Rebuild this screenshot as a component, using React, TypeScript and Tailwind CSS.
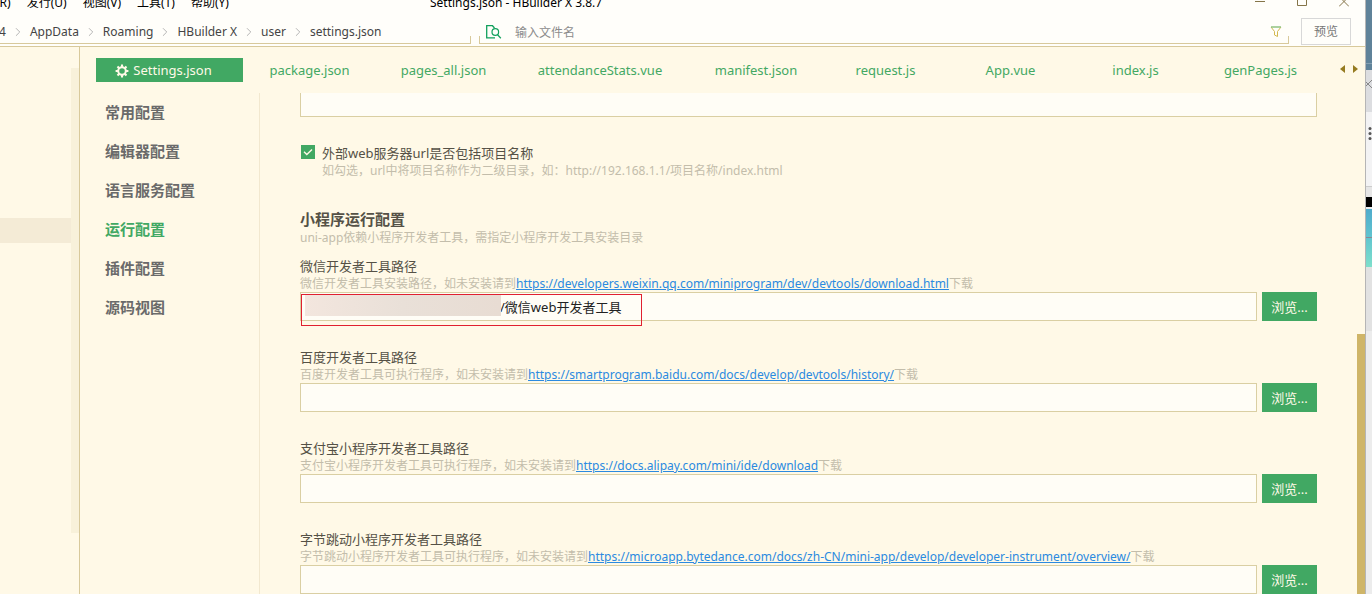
import { ChevronRight } from "lucide-react"
import clsx from "clsx"

const menus = ["发行(U)", "视图(V)", "工具(T)", "帮助(Y)"]

const crumbs = ["AppData", "Roaming", "HBuilder X", "user", "settings.json"]

const tabs = [
  { name: "package.json", width: "w-[133px]" },
  { name: "pages_all.json", width: "w-[135px]" },
  { name: "attendanceStats.vue", width: "w-[178px]" },
  { name: "manifest.json", width: "w-[134px]" },
  { name: "request.js", width: "w-[125px]" },
  { name: "App.vue", width: "w-[125px]" },
  { name: "index.js", width: "w-[125px]" },
  { name: "genPages.js", width: "w-[125px]" },
]

const sections = ["常用配置", "编辑器配置", "语言服务配置", "运行配置", "插件配置", "源码视图"]

const fields = [
  {
    id: "weixin",
    label: "微信开发者工具路径",
    hint: "微信开发者工具安装路径，如未安装请到",
    url: "https://developers.weixin.qq.com/miniprogram/dev/devtools/download.html",
    value: "/微信web开发者工具",
  },
  {
    id: "baidu",
    label: "百度开发者工具路径",
    hint: "百度开发者工具可执行程序，如未安装请到",
    url: "https://smartprogram.baidu.com/docs/develop/devtools/history/",
    value: "",
  },
  {
    id: "alipay",
    label: "支付宝小程序开发者工具路径",
    hint: "支付宝小程序开发者工具可执行程序，如未安装请到",
    url: "https://docs.alipay.com/mini/ide/download",
    value: "",
  },
  {
    id: "bytedance",
    label: "字节跳动小程序开发者工具路径",
    hint: "字节跳动小程序开发者工具可执行程序，如未安装请到",
    url: "https://microapp.bytedance.com/docs/zh-CN/mini-app/develop/developer-instrument/overview/",
    value: "",
  },
]

function GearIcon() {
  return (
    <svg width="14" height="14" viewBox="0 0 14 14" fill="none" stroke="currentColor">
      <circle cx="7" cy="7" r="3.8" strokeWidth="2" />
      <path
        d="M7 .6V3M7 11V13.4M.6 7H3M11 7H13.4M2.5 2.5L4.2 4.2M9.8 9.8L11.5 11.5M2.5 11.5L4.2 9.8M9.8 4.2L11.5 2.5"
        strokeWidth="2.1"
      />
    </svg>
  )
}

function TitleBar() {
  return (
    <div className="flex h-[13px] items-end text-[12px] leading-5 text-black">
      <div className="flex w-[430px] shrink-0 items-end gap-4 whitespace-nowrap">
        <button className="-ml-1">(R)</button>
        {menus.map((menu) => (
          <button key={menu}>{menu}</button>
        ))}
      </div>
      <span className="flex-1 whitespace-nowrap">Settings.json - HBuilder X 3.8.7</span>
      <div className="flex gap-8 self-start pr-4 text-[#857549]">
        <button aria-label="最小化">
          <svg width="10" height="8" viewBox="0 0 10 8" stroke="currentColor">
            <path d="M0 1.5H10" />
          </svg>
        </button>
        <button aria-label="最大化">
          <svg width="10" height="8" viewBox="0 0 10 8" fill="none" stroke="currentColor">
            <path d="M.5 0V5.5H9.5V0" />
          </svg>
        </button>
        <button aria-label="关闭">
          <svg width="10" height="8" viewBox="0 0 10 8" stroke="currentColor">
            <path d="M0 6.5L6.5 0M10 6.5L3.5 0" />
          </svg>
        </button>
      </div>
    </div>
  )
}

function AddressBar() {
  return (
    <div className="flex h-[33px] items-end border-b border-[#d8c99b] pr-[14px] text-[12px] text-[#444]">
      <nav className="mb-[2px] flex h-7 w-[471px] shrink-0 items-end border-b border-[#d8c99b]">
        <div className="flex h-7 flex-1 items-center gap-[9px] whitespace-nowrap pt-[6px]">
          <span className="-ml-px">4</span>
          {crumbs.map((crumb) => (
            <span key={crumb} className="flex items-center gap-[9px]">
              <ChevronRight className="-mx-1 h-[14px] w-[14px] text-[#aaa]" strokeWidth={1.5} />
              <a href="#" className="leading-5">
                {crumb}
              </a>
            </span>
          ))}
        </div>
        <div className="h-[7px] w-px bg-[#d8c99b]" />
      </nav>
      <div className="mb-[2px] ml-2 flex h-7 flex-1 items-end border-b border-[#d8c99b]">
        <div className="h-[7px] w-px bg-[#d8c99b]" />
        <div className="flex h-7 flex-1 items-center px-[6px] pt-[6px]">
          <svg width="16" height="14" viewBox="0 0 16 14" fill="none" stroke="#12a05c">
            <path d="M9 12.9H.7V.7H6.5L8.5 3" strokeWidth="1.3" />
            <circle cx="9.3" cy="7" r="3.3" strokeWidth="1.2" />
            <path d="M11.5 9.6L14.8 13.2" strokeWidth="1.3" />
          </svg>
          <input
            aria-label="输入文件名"
            placeholder="输入文件名"
            className="ml-[13px] h-5 flex-1 bg-transparent text-[12px] outline-none placeholder:text-[#8c8c8c]"
          />
          <button aria-label="过滤">
            <svg width="12" height="12" viewBox="0 0 12 12" fill="none">
              <path d="M1 1H11L7.5 5.5V10.5L4.5 9V5.5Z" stroke="#d3b94f" />
              <path d="M1 1H11" stroke="#6fc79a" />
            </svg>
          </button>
        </div>
        <div className="h-[7px] w-px bg-[#d8c99b]" />
      </div>
      <button className="mb-[1px] ml-3 h-[27px] w-[50px] border border-[#d8d8d8] text-[12px] text-[#777]">预览</button>
    </div>
  )
}

function Tabs() {
  return (
    <div className="flex h-[46px] shrink-0 items-center pl-4 pr-[7px] text-[13px] text-[#43a863]">
      <button className="flex h-6 w-[147px] shrink-0 items-center justify-center gap-1 bg-[#41a863] pr-3 pt-px text-[#fff9e7]">
        <GearIcon />
        Settings.json
      </button>
      {tabs.map((tab) => (
        <button key={tab.name} className={clsx("h-6 shrink-0 pt-[2px]", tab.width)}>
          {tab.name}
        </button>
      ))}
      <div className="ml-auto flex gap-2 pb-[2px] text-[#957b20]">
        <button aria-label="向左">
          <svg width="5" height="8" viewBox="0 0 5 8" fill="currentColor">
            <path d="M5 0V8L0 4Z" />
          </svg>
        </button>
        <button aria-label="向右">
          <svg width="5" height="8" viewBox="0 0 5 8" fill="currentColor">
            <path d="M0 0V8L5 4Z" />
          </svg>
        </button>
      </div>
    </div>
  )
}

function PathField({ field }: { field: (typeof fields)[number] }) {
  return (
    <div className="mb-[27px]">
      <label htmlFor={field.id} className="block text-[13px] leading-[18px] text-[#555146]">
        {field.label}
      </label>
      <p className="whitespace-nowrap text-[12px] leading-[17px] text-[#c3bdab]">
        {field.hint}
        <a href={field.url} className="text-[#2b8ae0] underline">
          {field.url}
        </a>
        下载
      </p>
      <div className="relative flex gap-[5px]">
        <input
          id={field.id}
          defaultValue={field.value}
          className={clsx(
            "h-[29px] min-w-0 flex-1 border border-[#dacfa3] bg-[#fffdf6] text-[13px] text-[#222] outline-none",
            field.value ? "pl-[199px]" : "pl-1",
          )}
        />
        <button className="h-[29px] w-[55px] bg-[#41a863] pt-[2px] text-[13px] text-[#fff9e7]">浏览...</button>
        {field.value && (
          <>
            {/* masked user folder and the highlight frame */}
            <div className="absolute left-[5px] top-[3px] h-[21px] w-[196px] bg-linear-to-r from-[#f3e6de] via-[#e9e0d8] to-[#e8dcd3]" />
            <div className="pointer-events-none absolute left-px top-[2px] h-8 w-[341px] border border-[#e02030]" />
          </>
        )}
      </div>
    </div>
  )
}

function Settings() {
  return (
    <div className="flex min-h-0 flex-1">
      <nav className="flex w-[180px] shrink-0 flex-col items-start border-r border-[#f2e8cf] pl-[25px] text-[15px] font-bold text-[#6a6a6a]">
        {sections.map((section) => (
          <button key={section} className={clsx("h-[39px]", section === "运行配置" && "text-[#41a863]")}>
            {section}
          </button>
        ))}
      </nav>
      <div className="min-w-0 flex-1 overflow-hidden px-10">
        <input
          aria-label="外部web服务器url"
          className="block h-6 w-full border border-t-0 border-[#dacfa3] bg-[#fffdf6] px-1 outline-none"
        />
        <div className="mt-[27px] flex gap-[7px] pl-px">
          <div className="relative mt-px h-[14px] w-[14px]">
            <input
              id="include-name"
              type="checkbox"
              defaultChecked
              className="block h-[14px] w-[14px] appearance-none bg-[#41a863]"
            />
            <svg
              className="pointer-events-none absolute inset-0"
              width="14"
              height="14"
              viewBox="0 0 14 14"
              fill="none"
              stroke="#fff9e7"
              strokeWidth="1.4"
            >
              <path d="M3 6.8L5.8 9.5L11 4.5" />
            </svg>
          </div>
          <div className="whitespace-nowrap">
            <label htmlFor="include-name" className="block text-[13px] leading-[18px] text-[#555146]">
              外部web服务器url是否包括项目名称
            </label>
            <p className="text-[12px] leading-[17px] text-[#c3bdab]">
              如勾选，url中将项目名称作为二级目录，如：http://192.168.1.1/项目名称/index.html
            </p>
          </div>
        </div>
        <h2 className="mt-[30px] text-[15px] font-bold leading-5 text-[#555146]">小程序运行配置</h2>
        <p className="mb-[11px] text-[12px] leading-[17px] text-[#c3bdab]">
          uni-app依赖小程序开发者工具，需指定小程序开发工具安装目录
        </p>
        {fields.map((field) => (
          <PathField key={field.id} field={field} />
        ))}
      </div>
      <div className="mt-[241px] w-2 shrink-0 bg-[#cfb568]" />
    </div>
  )
}

// sliver of the windows lying behind the editor
function Backdrop() {
  return (
    <div className="flex w-[7px] shrink-0 flex-col overflow-hidden border-l border-[#b5b5b5] bg-[#ececec]">
      <div className="flex h-[70px] shrink-0 flex-col justify-end bg-[#5f8299]">
        <div className="mb-[6px] h-px bg-[#86a0b2]" />
      </div>
      <div className="flex h-[42px] shrink-0 items-start bg-[#dcdde0] pt-[10px]">
        <svg width="6" height="9" viewBox="0 0 6 9" stroke="#888">
          <path d="M-2 0L6 8M6 0L-2 8" />
        </svg>
      </div>
      <div className="h-[74px] shrink-0 bg-[#f3f3f4] pt-[14px]">
        <svg width="6" height="15" viewBox="0 0 6 15" fill="#555">
          <circle cx="4" cy="2.5" r="1.5" />
          <circle cx="4" cy="7.5" r="1.5" />
          <circle cx="4" cy="12.5" r="1.5" />
        </svg>
      </div>
      <div className="h-[11px] shrink-0 border-t border-[#ccc] bg-[#e6e6e6]" />
      <div className="h-[10px] shrink-0 bg-black" />
      <div className="mt-[2px] h-7 shrink-0 bg-linear-to-b from-[#50abcc] to-[#60c4cf]" />
      <div className="h-[30px] shrink-0 border-t border-[#8a8a95] bg-linear-to-b from-[#62c6cf] to-[#7fdfcb]" />
      <div className="h-16 shrink-0 bg-[#e2e2e2]" />
    </div>
  )
}

export default function App() {
  return (
    <div className="flex h-screen overflow-hidden bg-[#fff9e7] font-['Noto_Sans','Noto_Sans_CJK_SC',sans-serif]">
      <div className="flex min-w-0 flex-1 flex-col">
        <header className="flex h-[47px] shrink-0 flex-col justify-between bg-[#fffefa]">
          <TitleBar />
          <AddressBar />
        </header>
        <div className="flex min-h-0 flex-1">
          <aside className="flex w-20 shrink-0 border-r border-[#d8c99b]">
            <div className="flex-1 pt-[171px]">
              <div className="h-[25px] bg-[#f4ebd6]" />
            </div>
            <div className="mt-[21px] h-[465px] w-2 bg-[#f8f1da]" />
          </aside>
          <main className="flex min-w-0 flex-1 flex-col">
            <Tabs />
            <Settings />
          </main>
        </div>
      </div>
      <Backdrop />
    </div>
  )
}
